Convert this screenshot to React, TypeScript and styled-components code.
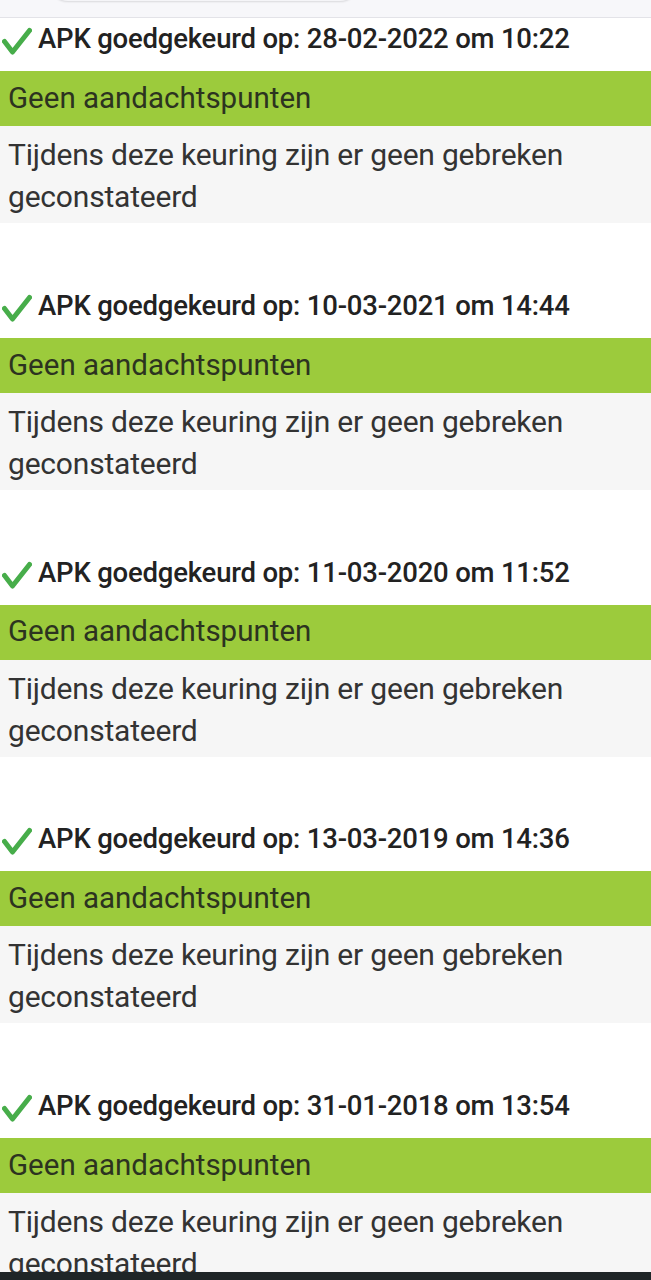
import React from 'react';
import styled, { createGlobalStyle } from 'styled-components';

const GlobalStyle = createGlobalStyle`
  html, body {
    margin: 0;
    padding: 0;
    background: #ffffff;
    font-family: Roboto, "Liberation Sans", Arial, sans-serif;
  }
`;

const Page = styled.div`
  display: flex;
  flex-direction: column;
  background: #ffffff;
`;

const TopBar = styled.div`
  height: 18px;
  display: flex;
  align-items: flex-end;
  padding: 0 0 16px 48px;
  box-sizing: border-box;
  overflow: hidden;
  background: #f7f7fa;
  border-bottom: 1px solid #e3e3e8;
`;

const SearchPill = styled.div`
  width: 312px;
  height: 40px;
  flex-shrink: 0;
  border-radius: 20px;
  background: #f5f5f8;
  box-shadow: 0 1px 2px rgba(0, 0, 0, 0.12);
`;

const Keuring = styled.section<{ first?: boolean }>`
  display: flex;
  flex-direction: column;
  margin-top: ${props => (props.first ? '0' : '61.75px')};
`;

const KeuringHeader = styled.div`
  height: 53px;
  display: flex;
  align-items: flex-start;
  gap: 6px;
  padding: 3px 0 0 2px;
  box-sizing: border-box;
`;

const CheckIcon = styled.svg`
  width: 30px;
  height: 32px;
  flex-shrink: 0;
  margin-top: 6px;
`;

const HeaderTitle = styled.h3`
  margin: 0;
  font-size: 27.5px;
  font-weight: 500;
  line-height: 36px;
  color: #222222;
  letter-spacing: -0.2px;
`;

const StatusBand = styled.div`
  height: 55px;
  display: flex;
  align-items: center;
  padding: 0 8px;
  box-sizing: border-box;
  background: #9ccb3c;
  color: #2c3320;
  font-size: 29.5px;
  line-height: 1;
`;

const Remark = styled.p`
  margin: 0;
  padding: 8px 8px 5px;
  background: #f6f6f6;
  color: #333333;
  font-size: 30px;
  line-height: 42px;
  letter-spacing: -0.2px;
`;

const NavBar = styled.div`
  position: fixed;
  left: 0;
  right: 0;
  bottom: 0;
  height: 8px;
  background: #1f2527;
`;

const keuringen = [
  '28-02-2022 om 10:22',
  '10-03-2021 om 14:44',
  '11-03-2020 om 11:52',
  '13-03-2019 om 14:36',
  '31-01-2018 om 13:54',
];

const Check = () => (
  <CheckIcon viewBox="0 0 30 32">
    <polyline
      points="2.5,14.5 10.5,25 27.5,3.5"
      fill="none"
      stroke="#47ad4a"
      strokeWidth="5"
      strokeLinecap="round"
      strokeLinejoin="round"
    />
  </CheckIcon>
);

export default function App() {
  return (
    <>
      <GlobalStyle />
      <Page>
        <TopBar>
          <SearchPill />
        </TopBar>
        {keuringen.map((datum, i) => (
          <Keuring key={datum} first={i === 0}>
            <KeuringHeader>
              <Check />
              <HeaderTitle>APK goedgekeurd op: {datum}</HeaderTitle>
            </KeuringHeader>
            <StatusBand>Geen aandachtspunten</StatusBand>
            <Remark>Tijdens deze keuring zijn er geen gebreken geconstateerd</Remark>
          </Keuring>
        ))}
      </Page>
      <NavBar />
    </>
  );
}
